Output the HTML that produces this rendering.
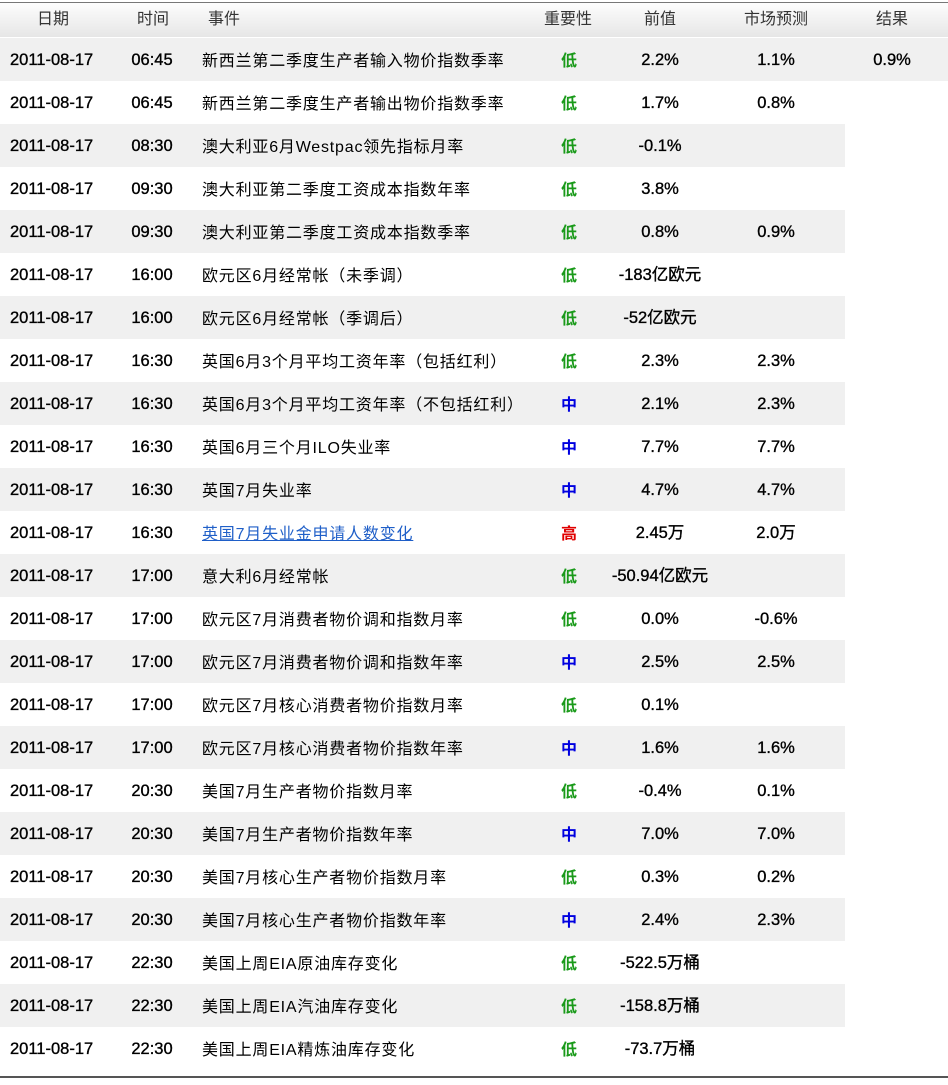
<!DOCTYPE html>
<html><head><meta charset="utf-8"><style>
body{margin:0;background:#fff;width:948px;height:1085px;overflow:hidden;font-family:"Liberation Sans","Noto Sans CJK SC",sans-serif;}
.hd{position:absolute;left:0;top:2px;width:948px;height:34px;border-top:1px solid #777;background:linear-gradient(#fdfdfd,#e6e6e6);color:#333;font-size:16px}
.hd span,.r span{position:absolute;top:50%;transform:translateY(-50%);white-space:nowrap;line-height:20px}
.r{position:absolute;left:0;height:43px;width:948px;font-size:16px;color:#000}
.r.g::before{content:"";position:absolute;left:0;top:0;bottom:0;width:845px;background:#f0f0f0}
.r.f::before{width:948px}
.c{transform:translate(-50%,-50%)!important}
.n{font-size:16.5px;-webkit-text-stroke:0.35px #000}
.e{letter-spacing:0.8px;margin-top:2px}
.lo,.mi,.hi{margin-top:2px;font-weight:bold}
.lo{color:#1a9a1a}.mi{color:#0000e0}.hi{color:#e00000}
a{color:#1f5fc8;text-decoration:underline}
.bt{position:absolute;left:0;top:1076px;width:948px;border-top:2px solid #555}
</style></head><body>
<div class="hd"><span style="left:37px">日期</span><span style="left:137px">时间</span><span style="left:208px">事件</span><span style="left:544px">重要性</span><span style="left:644px">前值</span><span style="left:744px">市场预测</span><span style="left:876px">结果</span></div>
<div id="rows"></div>
<div class="bt"></div>
<script>
var d=[["06:45","新西兰第二季度生产者输入物价指数季率","低","2.2%","1.1%","0.9%"],
["06:45","新西兰第二季度生产者输出物价指数季率","低","1.7%","0.8%",""],
["08:30","澳大利亚6月Westpac领先指标月率","低","-0.1%","",""],
["09:30","澳大利亚第二季度工资成本指数年率","低","3.8%","",""],
["09:30","澳大利亚第二季度工资成本指数季率","低","0.8%","0.9%",""],
["16:00","欧元区6月经常帐（未季调）","低","-183亿欧元","",""],
["16:00","欧元区6月经常帐（季调后）","低","-52亿欧元","",""],
["16:30","英国6月3个月平均工资年率（包括红利）","低","2.3%","2.3%",""],
["16:30","英国6月3个月平均工资年率（不包括红利）","中","2.1%","2.3%",""],
["16:30","英国6月三个月ILO失业率","中","7.7%","7.7%",""],
["16:30","英国7月失业率","中","4.7%","4.7%",""],
["16:30","<a>英国7月失业金申请人数变化</a>","高","2.45万","2.0万",""],
["17:00","意大利6月经常帐","低","-50.94亿欧元","",""],
["17:00","欧元区7月消费者物价调和指数月率","低","0.0%","-0.6%",""],
["17:00","欧元区7月消费者物价调和指数年率","中","2.5%","2.5%",""],
["17:00","欧元区7月核心消费者物价指数月率","低","0.1%","",""],
["17:00","欧元区7月核心消费者物价指数年率","中","1.6%","1.6%",""],
["20:30","美国7月生产者物价指数月率","低","-0.4%","0.1%",""],
["20:30","美国7月生产者物价指数年率","中","7.0%","7.0%",""],
["20:30","美国7月核心生产者物价指数月率","低","0.3%","0.2%",""],
["20:30","美国7月核心生产者物价指数年率","中","2.4%","2.3%",""],
["22:30","美国上周EIA原油库存变化","低","-522.5万桶","",""],
["22:30","美国上周EIA汽油库存变化","低","-158.8万桶","",""],
["22:30","美国上周EIA精炼油库存变化","低","-73.7万桶","",""]];
var h="";d.forEach(function(r,i){var cl={"低":"lo","中":"mi","高":"hi"}[r[2]];
h+='<div class="r'+(i%2==0?' g':'')+(i==0?' f':'')+'" style="top:'+(38+i*43)+'px"><span class="n" style="left:10px">2011-08-17</span><span class="n c" style="left:152px">'+r[0]+'</span><span class="e" style="left:202px">'+r[1]+'</span><span class="c '+cl+'" style="left:569px">'+r[2]+'</span><span class="n c" style="left:660px">'+r[3]+'</span><span class="n c" style="left:776px">'+r[4]+'</span><span class="n c" style="left:892px">'+r[5]+'</span></div>';});
document.getElementById("rows").innerHTML=h;
</script>
</body></html>
